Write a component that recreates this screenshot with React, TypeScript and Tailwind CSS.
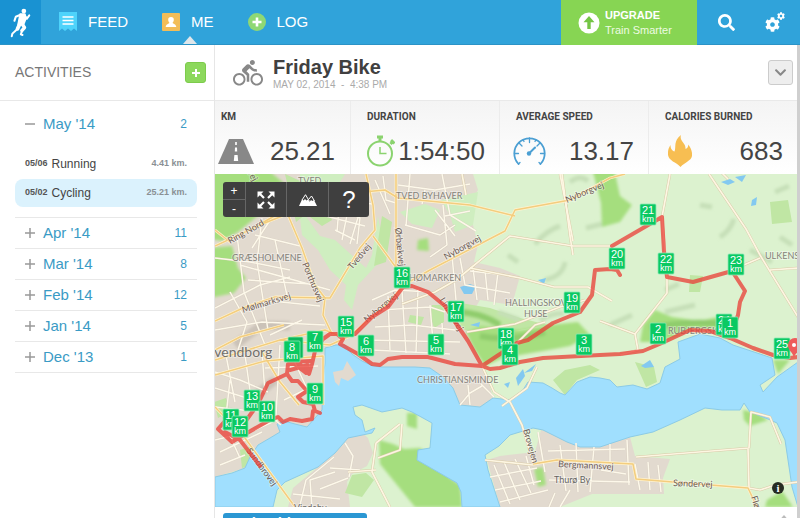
import React from "react";
import { FaCog, FaSearch, FaChevronDown } from "react-icons/fa";
import { MdDirectionsBike } from "react-icons/md";

const months = [
  { name: "Apr '14", count: 11 },
  { name: "Mar '14", count: 8 },
  { name: "Feb '14", count: 12 },
  { name: "Jan '14", count: 5 },
  { name: "Dec '13", count: 1 },
];

const activities = [
  { date: "05/06", sport: "Running", km: "4.41 km.", active: false },
  { date: "05/02", sport: "Cycling", km: "25.21 km.", active: true },
];

function RunnerLogo() {
  return (
    <svg viewBox="24 16 68 92" className="h-[31px] w-[23px]" fill="none" stroke="#fff" strokeLinecap="round" strokeLinejoin="round" aria-hidden="true">
      <circle cx="68" cy="28" r="7" fill="#fff" stroke="none" />
      <path d="M57 37 L71 37 L74 50 L67 68 L51 68 Z" fill="#fff" strokeWidth="5" />
      <path d="M70 40 L77 51 L84 41" strokeWidth="6" />
      <path d="M58 39 L44 45 L40 57" strokeWidth="6" />
      <path d="M62 66 L70 77 L62 86" strokeWidth="10" />
      <path d="M63 86 L59 97 L64 99" strokeWidth="6" />
      <path d="M56 66 L49 81" strokeWidth="11" />
      <path d="M48 82 L34 95 L32 103" strokeWidth="6" />
    </svg>
  );
}

function FeedIcon() {
  return (
    <svg viewBox="0 0 18 20" className="h-5 w-[18px]" aria-hidden="true">
      <path d="M0 0H18V19L15 16.5L12 19L9 16.5L6 19L3 16.5L0 19Z" fill="#4ed3fb" />
      <path d="M3.500 5H14.500M3.500 8.500H14.500M3.500 12H14.500" stroke="#fff" strokeWidth="1.600" />
    </svg>
  );
}

function MeIcon() {
  return (
    <svg viewBox="0 0 18 18" className="size-[18px]" aria-hidden="true">
      <rect width="18" height="18" rx="1" fill="#f2bd58" />
      <path d="M9 4C11 4 12 5.300 11.800 7C11.700 8.500 11 9.300 10.600 9.800C11 11 14 11 14.300 14H3.700C4 11 7 11 7.400 9.800C7 9.300 6.300 8.500 6.200 7C6 5.300 7 4 9 4Z" fill="#fff" />
    </svg>
  );
}

function LogIcon() {
  return (
    <svg viewBox="0 0 18 18" className="size-[18px]" aria-hidden="true">
      <circle cx="9" cy="9" r="9" fill="#8fd874" />
      <path d="M9 4.500V13.500M4.500 9H13.500" stroke="#fff" strokeWidth="2.600" />
    </svg>
  );
}

function Header() {
  return (
    <header className="flex h-[45px] shrink-0 border-b border-[#2b93c6] bg-[#30a3da] text-white">
      <a href="#home" aria-label="Home" className="flex w-[41px] items-center justify-center bg-[#1992d2]">
        <RunnerLogo />
      </a>
      <nav className="flex flex-1 gap-[34px] pl-[18px] text-[15px]">
        <a href="#feed" className="flex items-center gap-[11px]"><FeedIcon />FEED</a>
        <a href="#me" className="relative flex items-center gap-[11px]">
          <MeIcon />ME
          <span className="absolute bottom-0 left-[21px] border-x-[7px] border-b-[8px] border-x-transparent border-b-[#dfe6ea]" />
        </a>
        <a href="#log" className="flex items-center gap-[11px]"><LogIcon />LOG</a>
      </nav>
      <a href="#upgrade" className="-mb-px flex w-[136px] items-center gap-[5px] bg-[#87d553] pl-[17px]">
        <svg viewBox="0 0 22 22" className="size-[22px]" aria-hidden="true">
          <circle cx="11" cy="11" r="10.500" fill="#fff" />
          <path d="M11 4L16.500 10.200H12.700V17H9.300V10.200H5.500Z" fill="#74c545" />
        </svg>
        <span className="flex flex-col text-[11px] leading-[15px]">
          <b>UPGRADE</b>
          <span className="text-[#edfbe2]">Train Smarter</span>
        </span>
      </a>
      <button aria-label="Search" className="flex w-[58px] items-center justify-center"><FaSearch size={17} /></button>
      <button aria-label="Settings" className="flex w-[45px] items-center pl-[10px]">
        <svg viewBox="0 0 20 20" className="size-5" aria-hidden="true">
          <FaCog x="0" y="5" size={15} />
          <FaCog x="12" y="0" size={8} />
        </svg>
      </button>
    </header>
  );
}

function Toggle({ open }: { open: boolean }) {
  return (
    <svg viewBox="0 0 10 10" className="size-[10px]" stroke="#999" strokeWidth="1.500" aria-hidden="true">
      <path d={open ? "M0 5H10" : "M0 5H10M5 0V10"} />
    </svg>
  );
}

function MonthButton({ name, count, open }: { name: string; count: number; open: boolean }) {
  return (
    <button className="flex h-[30px] w-full items-center px-[10px] text-[#3a9bc5]">
      <Toggle open={open} />
      <span className="ml-2 flex-1 text-left text-[15px]">{name}</span>
      <span className="text-[12px]">{count}</span>
    </button>
  );
}

function Sidebar() {
  return (
    <aside className="w-[215px] shrink-0 border-r border-[#e6e6e6] bg-white">
      <div className="flex h-14 items-center justify-between border-b border-[#e8e8e8] pr-2 pl-[15px]">
        <h2 className="text-[14px] text-[#777]">ACTIVITIES</h2>
        <button aria-label="Add activity" className="flex size-[21px] items-center justify-center rounded-[3px] border border-[#7dcb4c] bg-[#8cd85c]">
          <svg viewBox="0 0 10 10" className="size-2" stroke="#fff" strokeWidth="2.500" aria-hidden="true"><path d="M0 5H10M5 0V10" /></svg>
        </button>
      </div>
      <div className="pt-2 pr-[17px] pl-[15px]">
        <MonthButton name="May '14" count={2} open />
        <ul className="pt-[9px] pb-[10px]">
          {activities.map((a) => (
            <li key={a.date} className={a.active ? "rounded-lg bg-[#dbf2fd]" : ""}>
              <a href="#activity" className={a.active ? "flex h-7 items-center gap-1 px-[10px]" : "flex h-[31px] items-center gap-1 px-[10px]"}>
                <b className="text-[9px] text-[#555]">{a.date}</b>
                <span className="flex-1 text-[12px] text-[#444]">{a.sport}</span>
                <b className="text-[9px] text-[#8a9094]">{a.km}</b>
              </a>
            </li>
          ))}
        </ul>
        <ul className="border-t border-[#e8e8e8]">
          {months.map((m) => (
            <li key={m.name} className="border-b border-[#e8e8e8]"><MonthButton name={m.name} count={m.count} open={false} /></li>
          ))}
        </ul>
      </div>
    </aside>
  );
}

function RoadIcon() {
  return (
    <svg viewBox="0 0 36 25" className="h-[25px] w-9" aria-hidden="true">
      <path d="M11 0H25L36 25H0Z" fill="#888" />
      <path d="M17.200 3H18.800V6H17.200ZM17 8.500H19L19.200 12.500H16.800ZM16.400 16H19.600L20.200 22H15.800Z" fill="#fff" />
    </svg>
  );
}

function StopwatchIcon() {
  return (
    <svg viewBox="0 0 28 32" className="h-8 w-7" fill="none" stroke="#8bd36f" aria-hidden="true">
      <circle cx="13" cy="18.500" r="12" strokeWidth="2" />
      <path d="M13 12V18.500H19.500" strokeWidth="1.500" />
      <path d="M10 .500H16V3.500H14.500V6H11.500V3.500H10Z" fill="#8bd36f" stroke="none" />
      <path d="M23.500 9L25.500 7M24 5.200L27.500 8.500" strokeWidth="3" />
    </svg>
  );
}

function GaugeIcon() {
  return (
    <svg viewBox="0 0 33 30" className="h-[30px] w-[33px]" fill="none" stroke="#4b9fd3" strokeLinecap="round" aria-hidden="true">
      <path d="M5.500 28A15.200 15.200 0 1 1 27.500 28" strokeWidth="1.800" />
      <path d="M16.500 2V6.500M6 7L9 10M27 7L24 10M1.500 17.500H5.500M31.500 17.500H27.500M5.500 28L7 26.500M27.500 28L26 26.500M10 3.500L11 5.500M23 3.500L22 5.500" strokeWidth="1.300" />
      <path d="M22 11.500L16.500 17" strokeWidth="2" />
      <circle cx="16" cy="17.500" r="2.200" fill="#4b9fd3" stroke="none" />
    </svg>
  );
}

function FlameIcon() {
  return (
    <svg viewBox="0 0 24 32" className="h-8 w-6" aria-hidden="true">
      <path d="M13 0C11 6 18 8 17.500 14C20 13 20.300 11 20.200 9.500C23 13 24.500 17 24 21C23 26 17 27 12.500 32C8 27 1 26 0 20C-.300 16 .500 13 2.500 10C2.500 14 4.500 16 6.500 16.500C8.500 12 5 6 13 0Z" fill="#f7be52" />
    </svg>
  );
}

const stats = [
  { label: "KM", value: "25.21", icon: <RoadIcon />, cell: "pl-[6px] pr-[15px]", row: "-ml-[3px]" },
  { label: "DURATION", value: "1:54:50", icon: <StopwatchIcon />, cell: "border-l border-[#ececec] pl-4 pr-[14px]", row: "" },
  { label: "AVERAGE SPEED", value: "13.17", icon: <GaugeIcon />, cell: "border-l border-[#ececec] pl-4 pr-[14px]", row: "-ml-[3px]" },
  { label: "CALORIES BURNED", value: "683", icon: <FlameIcon />, cell: "border-l border-[#ececec] pl-4 pr-[14px]", row: "pl-[3px]" },
];

function Stats() {
  return (
    <dl className="grid h-[74px] grid-cols-[135fr_149fr_149fr_149fr] border-t border-[#e9e9e9] bg-gradient-to-b from-[#f4f4f4] to-white">
      {stats.map((s) => (
        <div key={s.label} className={s.cell}>
          <dt className="mt-[10px] font-[Roboto] text-[10px] leading-3 font-bold whitespace-nowrap text-[#444]">{s.label}</dt>
          <dd className={s.row}>
            <div className="mt-3 flex h-8 items-center justify-between text-[26px] leading-8 text-[#444]">
              {s.icon}
              <span>{s.value}</span>
            </div>
          </dd>
        </div>
      ))}
    </dl>
  );
}

const water = [
  "215,477 232,473 245,468 250,457 258,445 270,438 280,432 277,424 284,421 295,424 307,427 315,418 322,410 323,380 325,363 325,348 336,345 345,345 352,354 362,361 373,366 382,367 415,367 430,368 443,377 453,388 460,405 480,407 493,398 510,400 523,390 528,382 543,383 552,388 560,393 565,395 577,382 590,377 600,378 610,380 617,387 633,385 647,389 660,383 665,367 680,359 678,342 700,334 720,338 733,345 772,358 775,375 760,385 763,392 777,377 798,362 798,507 792,487 788,460 785,440 777,423 768,419 750,412 744,403 740,410 722,410 705,408 680,420 653,432 630,437 600,447 580,447 567,442 543,430 533,428 510,435 499,446 485,455 488,470 500,507 462,507 461,492 457,483 417,460 418,450 430,448 432,423 423,418 412,412 402,408 382,412 362,405 353,407 355,415 362,420 365,432 375,428 372,433 348,438 335,453 318,467 285,482 277,490 273,507 215,507",
];

const urban = [
  "215,174 473,174 478,190 470,205 473,225 478,245 474,262 500,268 520,276 512,305 480,300 468,320 474,345 482,366 488,380 493,398 480,407 460,405 453,388 443,377 430,368 382,367 362,361 345,345 325,348 323,410 315,418 307,427 284,421 280,432 258,445 245,468 215,477",
  "318,467 335,453 348,438 357,428 368,438 373,453 367,466 352,474 347,482 350,507 288,507 293,488",
  "487,460 500,456 535,452 541,430 554,434 567,442 597,447 630,437 635,456 670,459 663,478 664,494 592,494 560,507 500,507",
];

const pale = [
  "305,215 320,236 335,240 356,259 366,268 372,255 378,216 383,245 379,262 372,270 358,285 352,310 344,300 346,285 330,270 318,250 302,235 300,218",
  "400,212 425,204 440,210 432,228 412,224",
  "441,200 478,192 473,225 455,232 450,215",
  "300,174 345,174 335,190 318,200 300,190",
];

const forest = [
  "205,164 268,170 285,184 273,202 255,218 238,232 222,241 205,238",
  "205,248 232,246 238,268 246,278 234,293 205,299",
  "591,164 613,164 620,196 632,205 620,222 602,227 601,203",
  "466,332 480,326 520,330 548,325 578,322 590,335 570,346 543,351 503,358 485,366 474,349",
  "379,440 393,444 404,449 420,448 437,460 450,478 460,485 462,507 415,507 380,464",
  "407,413 417,413 417,429 407,426",
  "418,240 428,238 429,251 417,250",
  "643,325 655,310 672,317 700,321 722,316 730,330 695,329 677,336 655,342 640,342",
  "743,410 757,413 768,420 750,426 744,420",
  "773,360 790,360 778,374",
  "767,500 782,491 793,507 765,507",
  "534,469 543,467 546,485 538,487",
];

const softForest = [
  "285,174 320,190 332,220 322,226 306,214 296,222",
  "455,302 490,308 520,318 548,325 490,335 465,330 452,318",
  "382,216 392,222 386,262 374,266",
  "553,380 565,370 590,365 600,370 577,380 565,395",
  "770,202 788,200 792,222 772,224",
  "690,275 703,276 700,292 689,292",
  "635,362 654,367 657,382 646,387",
  "352,475 366,473 374,480 362,497 345,493",
  "432,305 444,305 444,322 434,328 430,316",
  "240,450 252,446 250,466 242,468",
  "214,402 226,398 230,412 218,418",
  "410,315 424,317 421,325 408,322",
];

const smudges = [
  "M570 182q10-8 18-1M586 228l16-4M535 244q12-14 25-18M545 280q18-4 20-18M700 205l12 2M720 237q10-6 14-18M665 290l14-6M750 250l22 12M540 320q15-8 24-6M665 312l30-7M775 192l14-6M610 325l22-10M498 312l22 8M780 237l12 8M508 255l10 7",
];

const ponds = [
  "460,287 470,284 476,286 472,294 464,294",
  "470,325 480,322 479,327",
  "721,182 730,179 735,182 728,185",
  "735,177 746,175 742,182",
  "752,200 757,197 756,205 751,206",
  "504,384 510,382 508,388",
  "516,378 523,369 525,376 518,386",
  "524,373 536,364 532,371",
  "641,366 650,360 654,367 645,368",
  "538,280 546,278 544,284",
];

const minorRoads = [
  "M215 308L260 285L290 277M215 258L250 262L290 270M237 235L244 292L265 345M262 218L257 262L268 330M240 265L330 290M230 292L247 322L238 350M255 235L300 246M275 240L288 300M280 205L252 248M248 280L310 284M262 300L320 306M215 330L262 322L325 325M270 335L302 320",
  "M215 372L240 380L268 392M225 350L235 402M245 355L252 405M262 352L265 393M215 388L250 399L281 425M215 407L260 412M230 380L225 425M280 345L276 415M290 352L310 395M265 368L318 366M284 400L315 385M215 440L255 430L279 419M220 452L262 432M230 436L240 458M220 465L245 455",
  "M325 188L340 200L372 204M330 205L360 218L357 244M322 215L345 221L365 226M340 195L337 232M350 200L342 240M362 204L350 244M335 230L355 240M315 200L326 209M375 180L390 214M383 176L386 200L396 203M398 185L435 190L470 184M410 174L406 226M425 190L422 204M442 174L450 215L476 231M405 225L440 235L455 225",
  "M372 300L395 290L430 292M380 310L430 307L445 312M375 327L412 325L455 330M388 296L390 350M402 291L406 353M418 289L416 353M430 305L434 355M442 323L444 355M365 340L460 342M372 350L450 354M452 255L456 300M460 258L465 285L510 293M470 271L505 275M473 268L477 300M485 270L488 300M498 272L494 305M443 205L447 245L430 257M435 210L455 236M445 216L470 211",
  "M300 505L306 480L334 457M312 507L310 480L335 472M330 468L360 470M320 489L348 478M345 443L353 456L349 477M293 494L340 499",
  "M494 465L510 504M504 462L520 500M515 459L531 493M526 456L534 485M490 477L537 468M495 490L541 481M500 502L548 490M538 432L545 472M560 445L566 491M576 443L578 492M594 447L590 492M548 451L625 449M610 444L610 463M627 440L629 485M635 464L640 490M648 462L650 490M658 465L661 492M549 480L630 482M555 493L549 507M570 490L560 507M601 470L626 474",
  "M460 405L470 393L482 386M470 405L468 385M481 384L494 397",
];

const cream = [
  "M482 366L494 392L510 402L522 425L533 463",
  "M502 406L527 388L537 367M462 174L466 195M562 174L570 236L573 255",
  "M402 304L435 292L456 280L510 236L573 246L612 246M470 268L520 278L554 287L588 287L612 301M560 174L573 241M670 174L662 217L667 277L667 293L635 334L600 321M635 334L638 350L620 355",
  "M709 174L746 229L760 255L798 317M732 270L760 258M770 270L798 268M636 457L749 448L751 412L770 417L781 444M748 448L749 488L760 490L775 485L798 482M378 458L400 450L402 424M376 443L372 472L390 507M376 443L400 424M348 472L376 470M485 460L533 465M510 350L535 325L545 322M728 179L720 171",
  "M467 332L515 324L560 307L585 300",
];

const majorRoads = [
  "M215 246L262 224L285 215L330 195L385 190L398 198L470 205L515 216",
  "M262 223L310 196M288 215L302 248L315 285L325 298L323 315L332 334",
  "M215 321L243 308L275 297L330 298L360 248L375 230L373 205L366 174",
  "M396 174L396 270M402 286L430 270L480 244L505 231L515 210L570 200L610 178L625 174",
  "M373 236L400 273L403 287L380 310L350 336L330 345L280 340L215 360M215 375L265 361L323 356L323 405M280 340L325 330L345 338",
  "M215 407L245 438L295 507M262 352L280 382L299 405M215 350L240 337L284 325M533 464L557 460L633 464L636 479L673 482L748 488L757 507",
  "M215 230L230 242",
];

const route = [
  "M798 357L790 358L773 355L753 348L730 338L710 331L690 330L677 336L662 343L643 351L620 354L600 355L543 358L520 362L500 368L490 369L482 366L455 364L428 357L402 357L388 359L380 365L372 364L358 354L340 344L343 339L337 334L330 334L323 339L315 351L312 364L309 374L300 364L288 364L287 374L268 383L258 404L240 429",
  "M287 374L292 381L298 381L307 391L298 397L303 402L313 404L315 411L320 413M313 411L312 419L302 421L290 419L283 422L278 417L268 421L240 437L232 442L218 429L225 421M225 432L240 440L260 466M290 370L308 365L306 373L292 362L311 361",
  "M482 366L468 341L455 322L445 306L428 292L412 286L403 287L388 307L372 317L355 334L340 336",
  "M482 366L497 356L517 343L528 340L553 323L580 312L592 295L595 270L610 269L617 270L620 275M612 246L662 217L664 252L667 277L693 282L732 271L745 291L740 302L738 315L732 332",
];

const markers: [string, number, number][] = [
  ["21", 640, 204], ["20", 609, 248], ["22", 658, 253], ["23", 728, 254], ["24", 716, 314], ["1", 722, 317],
  ["2", 650, 323], ["25", 774, 338], ["16", 394, 267], ["17", 448, 301], ["15", 338, 316], ["7", 307, 331],
  ["6", 358, 335], ["8", 284, 341], ["19", 564, 292], ["18", 498, 328], ["4", 502, 344],
  ["3", 576, 334], ["5", 428, 334], ["9", 307, 383], ["13", 244, 390], ["10", 259, 401], ["11", 223, 409], ["12", 232, 416],
];

const streetNames: [string, number, number, number][] = [
  ["Ring Nord", 230, 244, -29], ["Porthusvej", 302, 264, 67], ["Mølmarksvej", 243, 313, -17], ["Tvedvej", 352, 270, -50],
  ["Ørbækvej", 395, 228, 84], ["Nyborgvej", 446, 260, -29], ["Nyborgvej", 567, 203, -23], ["Nyborgvej", 367, 323, -40],
  ["Linkenvej", 439, 300, 58], ["Sundbrovej", 246, 451, 53], ["Brovejen", 523, 430, 74], ["Bergmannsvej", 558, 467, 3],
  ["Søndervej", 673, 486, 2], ["Flø", 751, 497, 72], ["vej", 247, 172, 60],
];

const places: [string, number, number][] = [
  ["TVED", 298, 184], ["TVED BYHAVER", 396, 199], ["GRÆSHOLMENE", 232, 261], ["HØMARKEN", 409, 281], ["HALLINGSKOV", 505, 306],
  ["HUSE", 524, 317], ["CHRISTIANSMINDE", 417, 383], ["ULKENS", 765, 259], ["RUBJERGSK", 668, 334],
];

function RouteMap() {
  return (
    <svg viewBox="215 174 582 333" preserveAspectRatio="xMidYMid slice" className="block h-full w-full" role="img" aria-label="Route map">
      <defs>
        <filter id="soft" x="-10%" y="-10%" width="120%" height="120%"><feGaussianBlur stdDeviation="1.500" /></filter>
      </defs>
      <rect x="-400" y="0" width="2000" height="900" fill="#dcf2cf" />
      {urban.map((p) => <polygon key={p} points={p} fill="#e2dacf" />)}
      {pale.map((p) => <polygon key={p} points={p} fill="#cfeec0" />)}
      <g fill="#c0e6a4">{softForest.map((p) => <polygon key={p} points={p} />)}</g>
      <g filter="url(#soft)">
        {smudges.map((d) => <path key={d} d={d} fill="none" stroke="#c6dfb8" strokeWidth="5" />)}
        {forest.map((p) => <polygon key={p} points={p} fill="#a5de7e" />)}
        <path d="M480 336Q510 342 545 332M650 328Q690 320 722 324M455 312Q480 312 500 325" fill="none" stroke="#8fcc6c" strokeWidth="6" />
        <path d="M235 345L262 325L290 326M250 400L275 380" fill="none" stroke="#cbc2b8" strokeWidth="9" />
      </g>
      {water.map((p) => <polygon key={p} points={p} fill="#a0dffe" stroke="#8ccbe6" strokeWidth="1" />)}
      {ponds.map((p) => <polygon key={p} points={p} fill="#83c9f0" />)}
      <polygon points="333,372 343,370 347,361 356,375 348,381 341,378 339,386 335,382" fill="#e2dacf" />
      <g fill="none" strokeLinejoin="round">
        {minorRoads.map((d) => <path key={d} d={d} stroke="#cfc5b4" strokeWidth="2.200" opacity=".6" />)}
        {minorRoads.map((d) => <path key={d} d={d} stroke="#fdf8ea" strokeWidth="1.500" />)}
        {cream.map((d) => <path key={d} d={d} stroke="#d8caa8" strokeWidth="2.600" />)}
        {cream.map((d) => <path key={d} d={d} stroke="#fdf6e2" strokeWidth="1.700" />)}
        {majorRoads.map((d) => <path key={d} d={d} stroke="#fff3d0" strokeWidth="2.800" />)}
        {majorRoads.map((d) => <path key={d} d={d} stroke="#f3cd7e" strokeWidth="1.500" />)}
      </g>
      <g fontFamily="Lato, 'Noto Sans', sans-serif" stroke="#fff" strokeWidth="2" strokeOpacity=".35" paintOrder="stroke">
        {places.map(([t, x, y]) => <text key={t} x={x} y={y} fontSize="9" fill="#85827a">{t}</text>)}
        {streetNames.map(([t, x, y, r]) => (
          <text key={t + x} x={x} y={y} fontSize="9" fill="#6d5c55" transform={`rotate(${r} ${x} ${y})`}>{t}</text>
        ))}
        <text x="207" y="357" fontSize="14" fill="#72706b">Svendborg</text>
        <text x="554" y="483" fontSize="9" fill="#66645f">Thurø By</text>
        <text x="294" y="511" fontSize="9" fill="#66645f">Vindeby</text>
      </g>
      <g fill="none" stroke="#ea4038" strokeWidth="4" strokeLinejoin="round" strokeLinecap="round" opacity=".76">
        {route.map((d) => <path key={d} d={d} />)}
      </g>
      <g fontFamily="'Liberation Sans', sans-serif" fill="#fff" textAnchor="middle">
        <rect x="288" y="337" width="15" height="21" rx="1" fill="#0ab75a" stroke="#8be8b4" strokeWidth=".800" />
        {markers.map(([n, x, y]) => (
          <g key={n}>
            <rect x={x} y={y} width="16" height="21" rx="1" fill="#0ac962" stroke="#8be8b4" strokeWidth=".800" />
            <text x={x + 8} y={y + 10} fontSize="11">{n}</text>
            <text x={x + 8} y={y + 18} fontSize="9">km</text>
          </g>
        ))}
      </g>
      <path d="M794 358C793 352 788 351 788 345A7 7 0 0 1 802 345C802 351 795 352 794 358Z" fill="#ee5c5c" />
      <circle cx="794" cy="345" r="2" fill="#fff" />
    </svg>
  );
}

function MapToolbar() {
  return (
    <div className="absolute top-2 left-2 flex h-[35px] overflow-hidden rounded-[3px] bg-[#3f3f3f] text-white">
      <div className="flex w-[22px] flex-col divide-y divide-[#666] text-[12px] leading-4">
        <button aria-label="Zoom in" className="flex-1">+</button>
        <button aria-label="Zoom out" className="flex-1">-</button>
      </div>
      <button aria-label="Full screen" className="flex w-[41px] items-center justify-center border-l border-[#666]">
        <svg viewBox="0 0 18 18" className="size-[18px]" fill="#fff" stroke="#fff" strokeWidth="2.200" aria-hidden="true">
          <path d="M2 2L7 7M16 2L11 7M2 16L7 11M16 16L11 11" />
          <path d="M.500 .500H6.500L.500 6.500ZM17.500 .500V6.500L11.500 .500ZM.500 17.500V11.500L6.500 17.500ZM17.500 17.500H11.500L17.500 11.500Z" strokeWidth="0" />
        </svg>
      </button>
      <button aria-label="Elevation" className="flex w-[42px] items-center justify-center border-l border-[#666]">
        <svg viewBox="0 0 18 12" className="h-3 w-[18px]" aria-hidden="true">
          <path d="M0 12L3 5.500L4.500 6.500L6 5L7.500 6.500L9 5.500L10.500 8L12 6L13.500 7L15 6L18 12Z" fill="#fff" />
          <path d="M3 6L6.500 .700L10.500 7.500M9.500 5.500L12.500 2L15.500 7" fill="none" stroke="#fff" />
        </svg>
      </button>
      <button aria-label="Help" className="w-[41px] border-l border-[#666] text-[24px] leading-8">?</button>
    </div>
  );
}

export default function App() {
  return (
    <div className="flex h-screen flex-col overflow-hidden bg-white font-['Liberation_Sans',Arial,sans-serif]">
      <Header />
      <div className="flex min-h-0 flex-1">
        <Sidebar />
        <main className="min-w-0 flex-1 overflow-hidden">
          <div className="flex h-[55px] items-center pr-1 pl-[18px]">
            <MdDirectionsBike size={30} color="#888" aria-hidden="true" />
            <div className="ml-[10px] flex-1">
              <h1 className="text-[20px] leading-6 font-bold text-[#404040]">Friday Bike</h1>
              <p className="text-[10px] leading-3 whitespace-pre text-[#aaa]">MAY 02, 2014  -  4:38 PM</p>
            </div>
            <button aria-label="More" className="flex size-[25px] items-center justify-center rounded-[3px] border border-[#ccc] bg-[#eee]">
              <FaChevronDown size={13} color="#888" />
            </button>
          </div>
          <Stats />
          <div className="relative h-[333px]">
            <RouteMap />
            <MapToolbar />
            <button aria-label="Map information" className="absolute right-[13px] bottom-[13px] flex size-3 items-center justify-center rounded-full bg-[#262b22] font-['Liberation_Serif',serif] text-[11px] leading-3 font-bold text-white">i</button>
          </div>
          <div className="flex items-start justify-between pt-[6px] pr-[9px] pl-2">
            <button className="shrink-0 rounded-[3px] bg-[#2b97d3] px-2 pb-1 text-[15px] leading-5 font-bold text-white">Make this a Route</button>
            <span className="mt-1 h-2 w-2 rotate-45 border-t-2 border-l-2 border-[#bbb]" />
          </div>
        </main>
        <div className="w-[3px] shrink-0 bg-[#cfcfcf]" />
      </div>
    </div>
  );
}
